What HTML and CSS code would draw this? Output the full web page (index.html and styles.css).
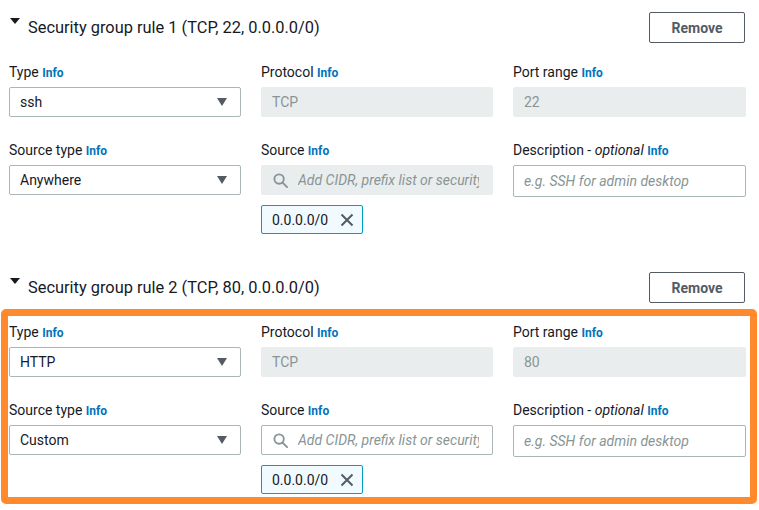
FILE: index.html
```html
<!DOCTYPE html>
<html lang="en">
<head>
<meta charset="utf-8">
<title>Security group rules</title>
<link rel="stylesheet" href="styles.css">
</head>
<body>
<div class="page">
  <section class="rule">
    <div class="rule-head">
      <span class="caret"></span>
      <h2 class="rule-title">Security group rule 1 (TCP, 22, 0.0.0.0/0)</h2>
      <button class="btn">Remove</button>
    </div>
    <div class="fields">
      <div class="field">
        <div class="label">Type <a class="info">Info</a></div>
        <div class="select"><span>ssh</span><span class="sel-caret"></span></div>
      </div>
      <div class="field">
        <div class="label">Protocol <a class="info">Info</a></div>
        <div class="input disabled">TCP</div>
      </div>
      <div class="field">
        <div class="label">Port range <a class="info">Info</a></div>
        <div class="input disabled">22</div>
      </div>
      <div class="field">
        <div class="label">Source type <a class="info">Info</a></div>
        <div class="select"><span>Anywhere</span><span class="sel-caret"></span></div>
      </div>
      <div class="field">
        <div class="label">Source <a class="info">Info</a></div>
        <div class="input search disabled">
          <svg class="search-icon" viewBox="0 0 16 16" width="15" height="15"><circle cx="6.5" cy="6.5" r="5" fill="none" stroke="currentColor" stroke-width="2"/><path d="M10.2 10.2 L15 15" stroke="currentColor" stroke-width="2" stroke-linecap="round"/></svg>
          <span class="placeholder">Add CIDR, prefix list or security group</span>
        </div>
        <div class="token">0.0.0.0/0 <svg class="x-icon" viewBox="0 0 14 14" width="14" height="14"><path d="M1.5 1.5 L12.5 12.5 M12.5 1.5 L1.5 12.5" stroke="currentColor" stroke-width="2" fill="none"/></svg></div>
      </div>
      <div class="field">
        <div class="label">Description - <i>optional</i> <a class="info">Info</a></div>
        <div class="input text"><span class="placeholder">e.g. SSH for admin desktop</span></div>
      </div>
    </div>
  </section>

  <section class="rule">
    <div class="rule-head">
      <span class="caret"></span>
      <h2 class="rule-title">Security group rule 2 (TCP, 80, 0.0.0.0/0)</h2>
      <button class="btn">Remove</button>
    </div>
    <div class="fields highlighted">
      <div class="highlight"></div>
      <div class="field">
        <div class="label">Type <a class="info">Info</a></div>
        <div class="select"><span>HTTP</span><span class="sel-caret"></span></div>
      </div>
      <div class="field">
        <div class="label">Protocol <a class="info">Info</a></div>
        <div class="input disabled">TCP</div>
      </div>
      <div class="field">
        <div class="label">Port range <a class="info">Info</a></div>
        <div class="input disabled">80</div>
      </div>
      <div class="field">
        <div class="label">Source type <a class="info">Info</a></div>
        <div class="select"><span>Custom</span><span class="sel-caret"></span></div>
      </div>
      <div class="field">
        <div class="label">Source <a class="info">Info</a></div>
        <div class="input search">
          <svg class="search-icon" viewBox="0 0 16 16" width="15" height="15"><circle cx="6.5" cy="6.5" r="5" fill="none" stroke="currentColor" stroke-width="2"/><path d="M10.2 10.2 L15 15" stroke="currentColor" stroke-width="2" stroke-linecap="round"/></svg>
          <span class="placeholder">Add CIDR, prefix list or security group</span>
        </div>
        <div class="token">0.0.0.0/0 <svg class="x-icon" viewBox="0 0 14 14" width="14" height="14"><path d="M1.5 1.5 L12.5 12.5 M12.5 1.5 L1.5 12.5" stroke="currentColor" stroke-width="2" fill="none"/></svg></div>
      </div>
      <div class="field">
        <div class="label">Description - <i>optional</i> <a class="info">Info</a></div>
        <div class="input text"><span class="placeholder">e.g. SSH for admin desktop</span></div>
      </div>
    </div>
  </section>
</div>
</body>
</html>
```

FILE: styles.css
```css
* { box-sizing: border-box; }
html, body { margin: 0; padding: 0; background: #ffffff; }
body {
  font-family: Roboto, "Noto Sans", "Liberation Sans", sans-serif;
  color: #16191f;
  font-size: 14px;
  line-height: 20px;
}
.page {
  width: 759px;
  padding: 12px 0 0 9px;
}
.rule {
  height: 260px;
}
.rule-head {
  display: flex;
  align-items: center;
  height: 31px;
  width: 736px;
}
.caret {
  width: 0;
  height: 0;
  border-left: 5px solid transparent;
  border-right: 5px solid transparent;
  border-top: 6px solid #16191f;
  margin: 0 8px 0 1px;
  align-self: flex-start;
  margin-top: 6px;
}
.rule-title {
  margin: 0;
  font-size: 16.4px;
  font-weight: 400;
  line-height: 22px;
  flex: 1;
  padding-top: 1px;
}
.btn {
  width: 96px;
  height: 31px;
  border: 1px solid #545b64;
  border-radius: 2px;
  background: #fff;
  color: #545b64;
  font-family: inherit;
  font-size: 14px;
  font-weight: 700;
  padding: 0;
}
.fields {
  display: grid;
  grid-template-columns: 232px 232px 233px;
  column-gap: 20px;
  row-gap: 23px;
  margin-top: 19px;
  position: relative;
}
.field { display: flex; flex-direction: column; }
.label {
  font-size: 14px;
  line-height: 20px;
  margin-bottom: 4px;
  color: #16191f;
}
.info {
  color: #0073bb;
  font-size: 12px;
  font-weight: 700;
}
.select, .input {
  height: 30px;
  border: 1px solid #aab7b8;
  border-radius: 2px;
  display: flex;
  align-items: center;
  padding: 0 13px 0 10px;
  font-size: 14px;
}
.select { justify-content: space-between; }
.sel-caret {
  width: 0; height: 0;
  border-left: 5px solid transparent;
  border-right: 5px solid transparent;
  border-top: 8px solid #545b64;
}
.input.disabled {
  background: #eaeded;
  border-color: #eaeded;
  color: #879596;
}
.input.text { height: 32px; }
.input.search { padding-left: 11px; overflow: hidden; white-space: nowrap; }
.search-icon { color: #879596; flex: none; margin-right: 10px; }
.placeholder { color: #879596; font-style: italic; white-space: nowrap; overflow: hidden; }
.token {
  margin-top: 10px;
  width: 102px;
  height: 29px;
  border: 1px solid #00a1c9;
  border-radius: 2px;
  background: #f1faff;
  display: flex;
  align-items: center;
  padding: 0 8px 0 10px;
  justify-content: space-between;
  font-size: 14px;
}
.x-icon { color: #545b64; }
.highlight {
  position: absolute;
  left: -8px;
  top: -13px;
  width: 756px;
  height: 195px;
  border: 7px solid #ff8a2e;
  border-radius: 5px;
  pointer-events: none;
}
```
